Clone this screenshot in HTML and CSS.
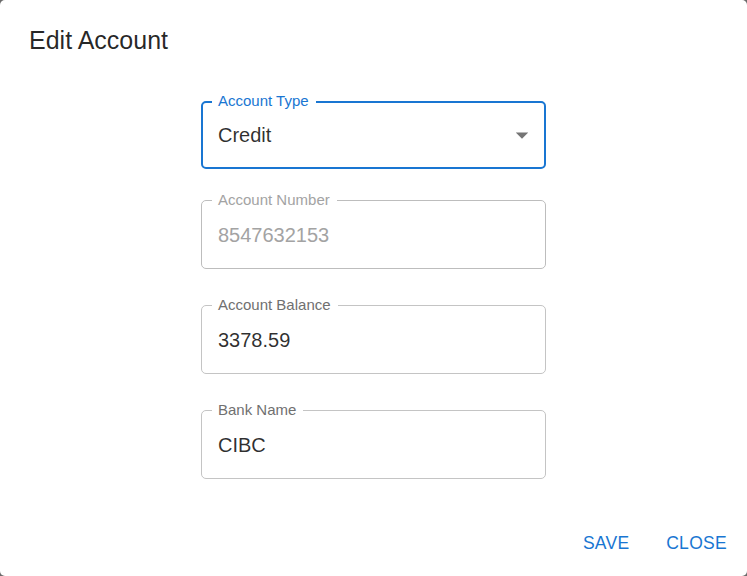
FILE: index.html
```html
<!DOCTYPE html>
<html lang="en">
<head>
<meta charset="utf-8">
<title>Edit Account</title>
<link rel="stylesheet" href="styles.css">
</head>
<body>
<div class="dialog">
  <h2 class="dialog-title">Edit Account</h2>
  <div class="dialog-content">
    <div class="field field--focused field--first">
      <span class="field-label">Account Type</span>
      <span class="field-value">Credit</span>
      <svg class="select-arrow" viewBox="0 0 24 24" width="30" height="30" aria-hidden="true"><path d="M7 10l5 5 5-5z"/></svg>
    </div>
    <div class="field field--disabled">
      <span class="field-label">Account Number</span>
      <span class="field-value">8547632153</span>
    </div>
    <div class="field">
      <span class="field-label">Account Balance</span>
      <span class="field-value">3378.59</span>
    </div>
    <div class="field field--last">
      <span class="field-label">Bank Name</span>
      <span class="field-value">CIBC</span>
    </div>
  </div>
  <div class="dialog-actions">
    <button class="btn">SAVE</button>
    <button class="btn">CLOSE</button>
  </div>
</div>
</body>
</html>
```

FILE: styles.css
```css
html, body {
  margin: 0;
  padding: 0;
  height: 100%;
}

body {
  background: #6b6b6b;
  font-family: "Liberation Sans", Arial, sans-serif;
}

.dialog {
  box-sizing: border-box;
  width: 747px;
  height: 576px;
  background: #fff;
  border-radius: 5px;
  display: flex;
  flex-direction: column;
  overflow: hidden;
}

.dialog-title {
  margin: 0;
  padding: 20px 30px 20px 29px;
  font-size: 25px;
  line-height: 40px;
  font-weight: 400;
  color: rgba(0, 0, 0, 0.85);
}

.dialog-content {
  padding: 21px 0 0 201px;
  display: flex;
  flex-direction: column;
}

.field {
  position: relative;
  box-sizing: border-box;
  width: 345px;
  height: 69px;
  border: 1px solid #c4c4c4;
  border-radius: 5px;
  padding: 2px 16px 0;
  display: flex;
  align-items: center;
  margin-bottom: 36px;
}

.field--first {
  height: 68px;
  margin-bottom: 31px;
}

.field--last {
  margin-bottom: 0;
}

.field-label {
  position: absolute;
  top: -9px;
  left: 10px;
  padding: 0 7px 0 6px;
  background: #fff;
  font-size: 15px;
  line-height: 15px;
  color: #707070;
  white-space: nowrap;
}

.field-value {
  font-size: 20px;
  line-height: 23px;
  color: rgba(0, 0, 0, 0.82);
}

.field--focused {
  border: 2px solid #1976d2;
  padding: 0 15px;
}

.field--focused .field-label {
  top: -10px;
  left: 9px;
  color: #1976d2;
}

.field--disabled {
  border-color: #bdbdbd;
}

.field--disabled .field-label,
.field--disabled .field-value {
  color: #a3a3a3;
}

.select-arrow {
  margin-left: auto;
  margin-right: -8px;
  fill: #757575;
  flex: none;
}

.dialog-actions {
  margin-top: auto;
  padding: 10px;
  display: flex;
  justify-content: flex-end;
  gap: 10px;
}

.btn {
  font-family: "Liberation Sans", Arial, sans-serif;
  font-size: 17.5px;
  line-height: 30px;
  letter-spacing: 0.3px;
  font-weight: 400;
  color: #1976d2;
  background: transparent;
  border: 0;
  padding: 6.5px 10px 8.5px;
  min-width: 80px;
  border-radius: 5px;
  cursor: pointer;
}
```
